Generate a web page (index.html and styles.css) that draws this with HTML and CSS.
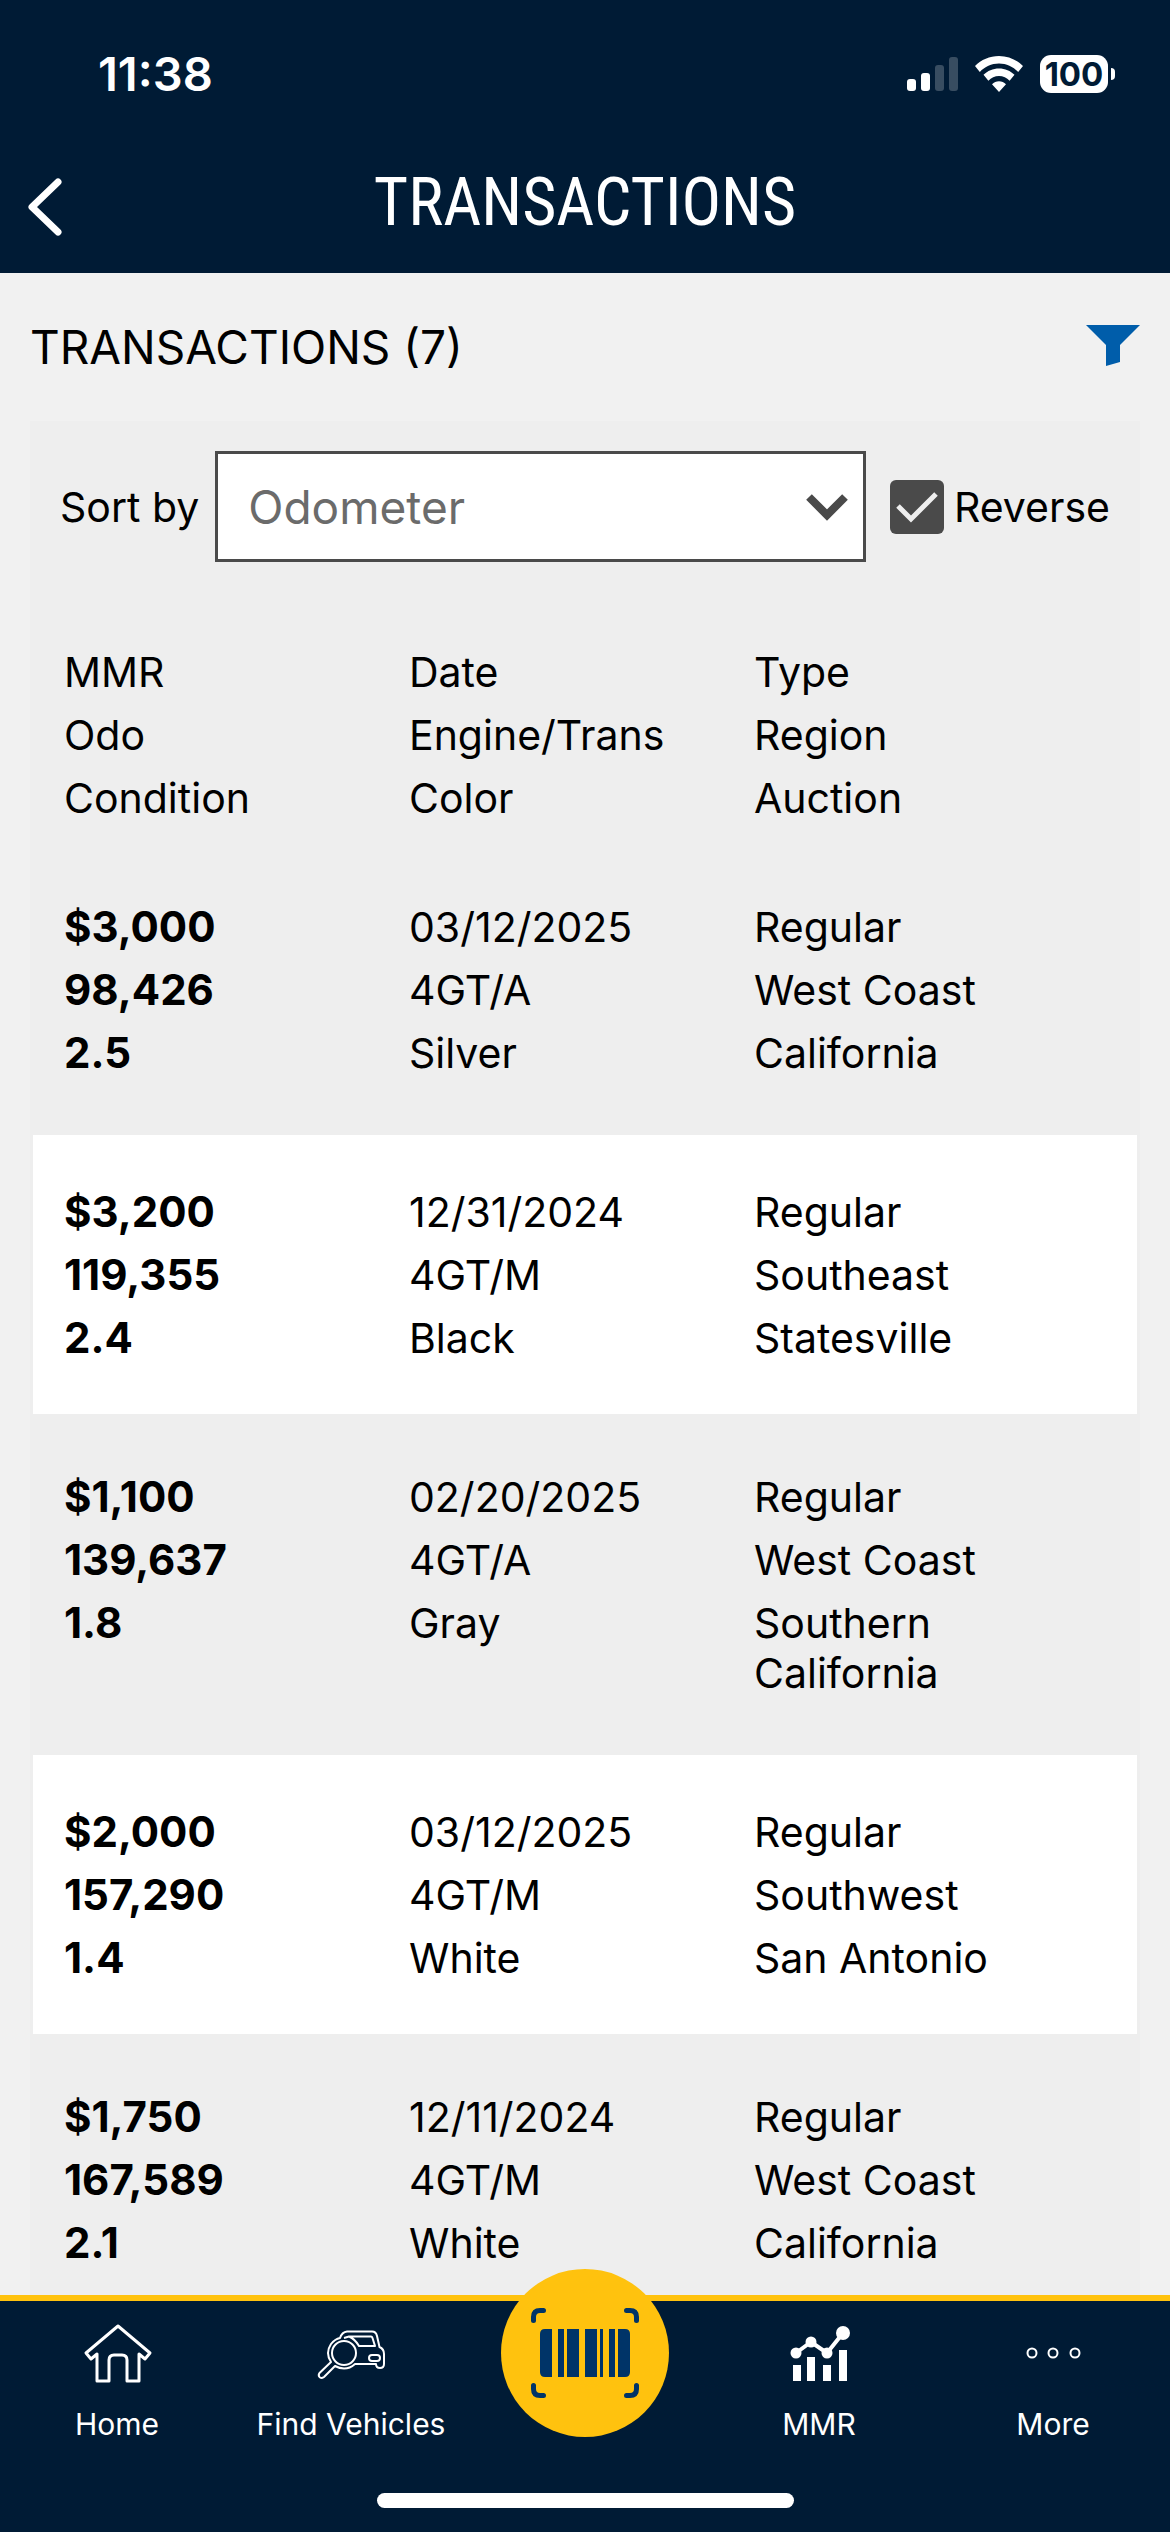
FILE: index.html
```
<!DOCTYPE html>
<html lang="en">
<head>
    <meta charset="utf-8"/>
    <meta name="viewport" content="width=device-width, initial-scale=1"/>
    <title>Transactions</title>
    <link rel="stylesheet" href="styles.css">
</head>
<body>
    <header class="header">
        <div class="status-bar">
            <span class="time">11:38</span>
            <div class="status-icons">
                <svg width="51" height="34" viewBox="0 0 51 34" fill="#fff">
                    <rect x="0" y="22" width="9" height="12" rx="3"/>
                    <rect x="14" y="16" width="9" height="18" rx="3"/>
                    <rect x="28" y="8" width="9" height="26" rx="3" opacity=".22"/>
                    <rect x="42" y="0" width="9" height="34" rx="3" opacity=".22"/>
                </svg>
                <svg width="48" height="36" viewBox="0 0 48 36" fill="#fff">
                    <path d="M24 0C14.600 0 6.200 3.800 0 10l4.800 6C9.800 10.900 16.500 7.600 24 7.600s14.200 3.300 19.200 8.400L48 10C41.800 3.800 33.400 0 24 0z"/>
                    <path d="M24 12.500c-6 0-11.500 2.400-15.500 6.300l4.900 6c2.800-2.800 6.500-4.700 10.600-4.700s7.800 1.900 10.600 4.700l4.900-6C35.500 14.900 30 12.500 24 12.500z"/>
                    <path d="M24 25.300c-2.700 0-5.100 1.100-7 2.900L24 36l7-7.800c-1.900-1.800-4.300-2.900-7-2.900z"/>
                </svg>
                <div class="battery">100</div>
            </div>
        </div>
        <div class="title-bar">
            <button class="back" aria-label="Back">
                <svg width="34" height="58" viewBox="0 0 34 58" fill="none" stroke="#fff" stroke-width="7" stroke-linecap="round" stroke-linejoin="round">
                    <path d="M30 4L4 29l26 25"/>
                </svg>
            </button>
            <h1>TRANSACTIONS</h1>
        </div>
    </header>

    <main>
        <div class="list-heading">
            <h2>TRANSACTIONS (7)</h2>
            <button class="filter" aria-label="Filter">
                <svg width="54" height="41" viewBox="0 0 54 41" fill="#005daa">
                    <path d="M0 0h54L34 20v17l-14 4V20z"/>
                </svg>
            </button>
        </div>

        <div class="panel">
            <div class="sort">
                <label for="sortBy">Sort by</label>
                <div class="select-wrap">
                    <select id="sortBy">
                        <option>Odometer</option>
                    </select>
                    <svg class="caret" width="42" height="26" viewBox="0 0 42 26" fill="none" stroke="#4a4a4a" stroke-width="8">
                        <path d="M3 3l18 18L39 3"/>
                    </svg>
                </div>
                <label class="reverse">
                    <input type="checkbox" checked/>
                    <svg class="tick" width="42" height="32" viewBox="0 0 42 32" fill="none" stroke="#eee" stroke-width="5">
                        <path d="M2 15l13 13L40 3"/>
                    </svg>
                    Reverse
                </label>
            </div>

            <table>
                <thead>
                    <tr>
                        <th><p>MMR</p><p>Odo</p><p>Condition</p></th>
                        <th><p>Date</p><p>Engine/Trans</p><p>Color</p></th>
                        <th><p>Type</p><p>Region</p><p>Auction</p></th>
                    </tr>
                </thead>
                <tbody>
                    <tr>
                        <td><p>$3,000</p><p>98,426</p><p>2.5</p></td>
                        <td><p>03/12/2025</p><p>4GT/A</p><p>Silver</p></td>
                        <td><p>Regular</p><p>West Coast</p><p>California</p></td>
                    </tr>
                    <tr>
                        <td><p>$3,200</p><p>119,355</p><p>2.4</p></td>
                        <td><p>12/31/2024</p><p>4GT/M</p><p>Black</p></td>
                        <td><p>Regular</p><p>Southeast</p><p>Statesville</p></td>
                    </tr>
                    <tr>
                        <td><p>$1,100</p><p>139,637</p><p>1.8</p></td>
                        <td><p>02/20/2025</p><p>4GT/A</p><p>Gray</p></td>
                        <td><p>Regular</p><p>West Coast</p><p>Southern California</p></td>
                    </tr>
                    <tr>
                        <td><p>$2,000</p><p>157,290</p><p>1.4</p></td>
                        <td><p>03/12/2025</p><p>4GT/M</p><p>White</p></td>
                        <td><p>Regular</p><p>Southwest</p><p>San Antonio</p></td>
                    </tr>
                    <tr>
                        <td><p>$1,750</p><p>167,589</p><p>2.1</p></td>
                        <td><p>12/11/2024</p><p>4GT/M</p><p>White</p></td>
                        <td><p>Regular</p><p>West Coast</p><p>California</p></td>
                    </tr>
                </tbody>
            </table>
        </div>
    </main>

    <nav>
        <a class="tab" href="#">
            <svg width="68" height="60" viewBox="0 0 68 60" fill="none" stroke="#fff" stroke-width="3" stroke-linejoin="round">
                <path d="M35 3L3 30l5 6 6-5v27h12V37q0-5 5-5h8q5 0 5 5v21h12V31l6 5 5-6z"/>
            </svg>
            <span>Home</span>
        </a>
        <a class="tab" href="#">
            <svg width="68" height="60" viewBox="0 0 68 60" fill="none" stroke="#fff" stroke-width="2" stroke-linejoin="round">
                <circle cx="27" cy="30" r="12"/>
                <path d="M23 15q2-6 7-6.500h25q4 0 5 4.500l2.500 11q4.500 2 4.500 7v10q0 4-4 4t-4-4H38Q29 49 18 43L7 54q-3 2-4.500 0t0-4L14 39Q8 30 14 21q4-5 9-6z"/>
                <path d="M27 15l5-1.500h22q1 0 1.500 1.500l2.500 8H42q-4-7-10-9.500"/>
                <rect x="52" y="32" width="11" height="6" rx="3"/>
            </svg>
            <span>Find Vehicles</span>
        </a>
        <div class="tab">
            <button class="scan" aria-label="Scan">
                <svg width="108" height="90" viewBox="0 0 108 90" fill="#003468">
                    <path d="M21 21v48h-7q-5 0-5-5V26q0-5 5-5z"/>
                    <path d="M27 21h6v48h-6zM36 21h12v48H36zM54 21h12v48H54zM69 21h3v48h-3zM78 21h6v48h-6z"/>
                    <path d="M87 21h7q5 0 5 5v38q0 5-5 5h-7z"/>
                    <g fill="none" stroke="#003468" stroke-width="5" stroke-linecap="round">
                        <path d="M2.500 12.500V9q0-6.500 6.500-6.500h3.500M95.500 2.500H99q6.500 0 6.500 6.500v3.500M2.500 77.500V81q0 6.500 6.500 6.500h3.500M95.500 87.500H99q6.500 0 6.500-6.500v-3.500"/>
                    </g>
                </svg>
            </button>
        </div>
        <a class="tab" href="#">
            <svg width="68" height="60" viewBox="0 0 68 60" fill="#fff">
                <path d="M8 42h8v16H8zM22 34h8v24h-8zM38 42h8v16h-8zM54 27h8v31h-8z"/>
                <circle cx="11" cy="30" r="5.500"/>
                <circle cx="26" cy="19" r="5.500"/>
                <circle cx="42" cy="30" r="5.500"/>
                <circle cx="58" cy="10" r="7"/>
                <path d="M11 30l15-11 16 11 16-20" fill="none" stroke="#fff" stroke-width="4"/>
            </svg>
            <span>MMR</span>
        </a>
        <a class="tab" href="#">
            <svg width="68" height="60" viewBox="0 0 68 60" fill="none" stroke="#fff" stroke-width="2">
                <circle cx="13" cy="30" r="4.500"/>
                <circle cx="34" cy="30" r="4.500"/>
                <circle cx="56" cy="30" r="4.500"/>
            </svg>
            <span>More</span>
        </a>
        <div class="home-indicator"></div>
    </nav>
</body>
</html>
```
FILE: styles.css
```
*{
    margin: 0;
    padding: 0;
    box-sizing: border-box;
}
body{
    display: flex;
    flex-direction: column;
    height: 100vh;
    background: #f1f1f1;
    color: black;
    font-family: Inter, "Liberation Sans", sans-serif;
    font-size: 41px;
    line-height: 50px;
}
svg{
    display: block;
    overflow: visible;
}
button{
    background: none;
    border: none;
    cursor: pointer;
}
h1, h2, th{
    font-weight: 400;
}
.header{
    background: #001b35;
    color: white;
}
.status-bar{
    display: flex;
    justify-content: space-between;
    align-items: center;
    height: 148px;
    padding: 0 62px 0 98px;
}
.time{
    font-size: 47px;
    font-weight: 600;
}
.status-icons{
    display: flex;
    align-items: center;
    gap: 17px;
}
.battery{
    position: relative;
    width: 68px;
    height: 38px;
    border-radius: 11px;
    background: white;
    color: #001b35;
    font-size: 33px;
    font-weight: 700;
    line-height: 38px;
    text-align: center;
}
.battery::after{
    content: "";
    position: absolute;
    top: 13px;
    right: -7px;
    width: 4px;
    height: 12px;
    border-radius: 0 4px 4px 0;
    background: white;
}
.title-bar{
    display: grid;
    grid-template-columns: 100px 1fr 100px;
    align-items: center;
    height: 125px;
    padding-bottom: 16px;
}
.back{
    padding: 8px 0 0 28px;
}
h1{
    font-family: "Roboto Condensed", "Liberation Sans Narrow", Roboto, sans-serif;
    font-size: 66px;
    line-height: 80px;
    text-align: center;
}
main{
    flex: 1;
    min-height: 0;
    overflow-y: auto;
    scrollbar-width: none;
    padding: 0 30px;
}
.list-heading{
    display: flex;
    justify-content: space-between;
    align-items: center;
    height: 148px;
}
.filter{
    padding-bottom: 4px;
}
h2{
    font-size: 46px;
}
.panel{
    background: #eee;
}
.sort{
    display: flex;
    align-items: center;
    padding: 30px 30px 0;
}
.select-wrap{
    position: relative;
    flex: 1;
    margin: 0 24px 0 16px;
}
select{
    appearance: none;
    width: 100%;
    height: 111px;
    padding: 0 30px;
    border: 3px solid #4a4a4a;
    border-radius: 0;
    background: white;
    color: #6b6b6b;
    font-family: inherit;
    font-size: 46px;
}
.caret{
    position: absolute;
    top: 43px;
    right: 18px;
    pointer-events: none;
}
.reverse{
    position: relative;
    display: flex;
    align-items: center;
    gap: 10px;
}
.reverse input{
    appearance: none;
    width: 54px;
    height: 54px;
    border-radius: 6px;
    background: #4a4a4a;
}
.tick{
    position: absolute;
    left: 6px;
    pointer-events: none;
}
table{
    display: block;
    padding-top: 30px;
}
thead, tbody{
    display: block;
}
tr{
    display: grid;
    grid-template-columns: repeat(3, 1fr);
    padding: 52px 38px 51px 31px;
    border: 3px solid #eee;
    text-align: left;
}
thead tr{
    padding-bottom: 21px;
}
tbody tr:nth-child(even){
    background: white;
}
td:first-child{
    font-size: 42px;
    font-weight: 700;
}
p + p{
    margin-top: 13px;
}
nav{
    display: grid;
    grid-template-columns: repeat(5, 1fr);
    border-top: 6px solid #ffc20e;
    background: #001b35;
}
.tab{
    display: flex;
    flex-direction: column;
    align-items: center;
    gap: 21px;
    height: 168px;
    padding-top: 22px;
    color: white;
    font-size: 30px;
    line-height: 40px;
    text-decoration: none;
}
.scan{
    display: flex;
    justify-content: center;
    align-items: center;
    flex-shrink: 0;
    width: 168px;
    height: 168px;
    margin-top: -54px;
    border-radius: 50%;
    background: #ffc20e;
}
.home-indicator{
    grid-column: 1 / -1;
    justify-self: center;
    width: 417px;
    height: 15px;
    margin: 24px 0;
    border-radius: 8px;
    background: white;
}
```
